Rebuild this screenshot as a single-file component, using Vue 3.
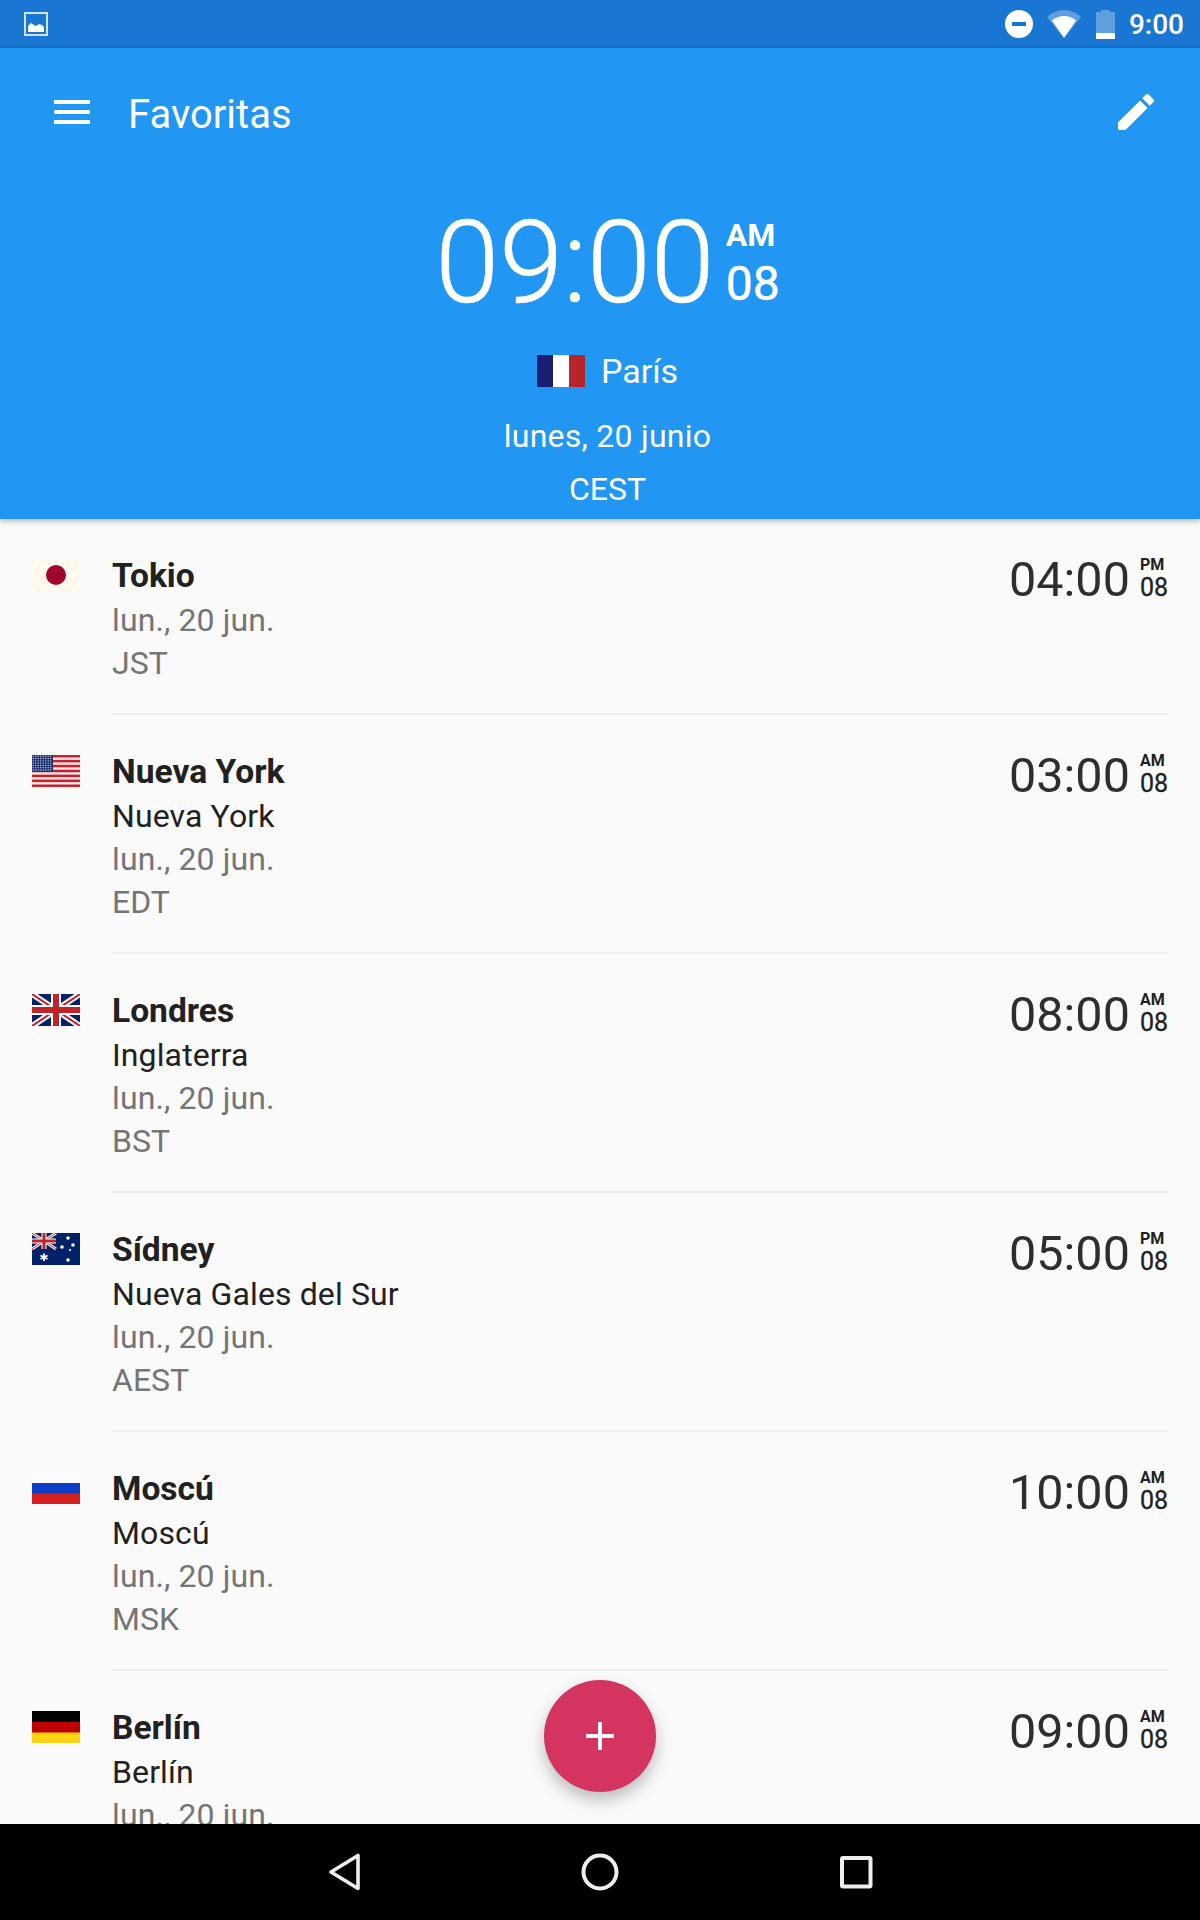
<script setup>
const rows = [
  { flag: 'jp', city: 'Tokio', date: 'lun., 20 jun.', zone: 'JST', time: '04:00', ap: 'PM' },
  { flag: 'us', city: 'Nueva York', sub: 'Nueva York', date: 'lun., 20 jun.', zone: 'EDT', time: '03:00', ap: 'AM' },
  { flag: 'gb', city: 'Londres', sub: 'Inglaterra', date: 'lun., 20 jun.', zone: 'BST', time: '08:00', ap: 'AM' },
  { flag: 'au', city: 'Sídney', sub: 'Nueva Gales del Sur', date: 'lun., 20 jun.', zone: 'AEST', time: '05:00', ap: 'PM' },
  { flag: 'ru', city: 'Moscú', sub: 'Moscú', date: 'lun., 20 jun.', zone: 'MSK', time: '10:00', ap: 'AM' },
  { flag: 'de', city: 'Berlín', sub: 'Berlín', date: 'lun., 20 jun.', zone: 'CEST', time: '09:00', ap: 'AM' }
]
const usStripes = [0, 2, 4, 6, 8, 10, 12]
const usDots = []
for (let y = 0; y < 7; y++) for (let x = 0; x < 8; x++) usDots.push({ x: 1.2 + x * 2.5, y: 1.2 + y * 2.3 })
</script>

<template>
  <div class="screen">
    <div class="status">
      <svg class="notif" width="24" height="24" viewBox="0 0 24 24">
        <rect x="1" y="1" width="22" height="22" fill="none" stroke="#fff" stroke-opacity=".8" stroke-width="2" />
        <path d="M4 20v-6l3-3 3 2 2 1 3-2 3 1 2 2v5z" fill="#fff" />
      </svg>
      <div class="status-right">
        <svg width="28" height="28" viewBox="0 0 28 28"><circle cx="14" cy="14" r="14" fill="#fff" /><rect x="7" y="12" width="14" height="4" fill="#1976D2" /></svg>
        <svg width="34" height="28" viewBox="0 0 34 28">
          <path d="M0 7C5 2.500 11 0 17 0s12 2.500 17 7L17 28z" fill="#fff" fill-opacity=".3" />
          <path d="M5 10.500C8.500 7.500 12.500 6 17 6s8.500 1.500 12 4.500L17 28z" fill="#fff" />
        </svg>
        <svg width="19" height="29" viewBox="0 0 19 29">
          <path d="M5 2V0h9v2h5v27H0V2z" fill="#fff" fill-opacity=".3" />
          <rect x="0" y="23" width="19" height="6" fill="#fff" />
        </svg>
        <span class="clock-small">9:00</span>
      </div>
    </div>

    <header class="header">
      <div class="toolbar">
        <svg width="48" height="48" viewBox="0 0 24 24"><path d="M3 18h18v-2H3v2zm0-5h18v-2H3v2zm0-7v2h18V6H3z" fill="#fff" /></svg>
        <span class="title">Favoritas</span>
        <svg width="48" height="48" viewBox="0 0 24 24"><path d="M3 17.250V21h3.750L17.810 9.940l-3.750-3.750L3 17.250zM20.710 7.040c.39-.39.39-1.020 0-1.410l-2.340-2.340c-.39-.39-1.020-.39-1.410 0l-1.830 1.830 3.750 3.750 1.830-1.830z" fill="#fff" /></svg>
      </div>
      <div class="hero">
        <div class="hero-clock">
          <span class="hero-time">09:00</span>
          <div class="hero-side"><span class="hero-ap">AM</span><span class="hero-sec">08</span></div>
        </div>
        <div class="hero-city">
          <svg width="48" height="32" viewBox="0 0 48 32"><rect width="16" height="32" fill="#1A1F71" /><rect x="16" width="16" height="32" fill="#fff" /><rect x="32" width="16" height="32" fill="#B5252B" /></svg>
          <span>París</span>
        </div>
        <div class="hero-date">lunes, 20 junio</div>
        <div class="hero-zone">CEST</div>
      </div>
    </header>

    <main class="list">
      <div v-for="r in rows" :key="r.flag" class="row">
        <svg class="flag" width="48" height="32" viewBox="0 0 48 32">
          <template v-if="r.flag === 'jp'">
            <rect width="48" height="32" fill="#FFF8EC" /><circle cx="24" cy="16" r="10" fill="#A0052D" />
          </template>
          <template v-else-if="r.flag === 'us'">
            <rect width="48" height="32" fill="#F4E4E4" />
            <rect v-for="s in usStripes" :key="s" y="0" width="48" height="2.460" :transform="`translate(0 ${s * 2.460})`" fill="#C8202C" />
            <rect width="21" height="17" fill="#1C2F6E" />
            <circle v-for="(d, i) in usDots" :key="i" :cx="d.x" :cy="d.y" r=".65" fill="#DDE3F2" />
          </template>
          <template v-else-if="r.flag === 'gb'">
            <rect width="48" height="32" fill="#012169" />
            <path d="M0 0L48 32M48 0L0 32" stroke="#fff" stroke-width="6" />
            <path d="M0 0L48 32M48 0L0 32" stroke="#C8202C" stroke-width="2" />
            <path d="M24 0V32M0 16H48" stroke="#fff" stroke-width="10" />
            <path d="M24 0V32M0 16H48" stroke="#C1232B" stroke-width="6" />
          </template>
          <template v-else-if="r.flag === 'au'">
            <rect width="48" height="32" fill="#012169" />
            <path d="M0 0L24 16M24 0L0 16" stroke="#fff" stroke-width="3" />
            <path d="M0 0L24 16M24 0L0 16" stroke="#C8202C" stroke-width="1" />
            <path d="M12 0V16M0 8H24" stroke="#fff" stroke-width="5" />
            <path d="M12 0V16M0 8H24" stroke="#C1232B" stroke-width="3" />
            <path d="M12 20.500v7.500M8.500 22.500l7 3.500M15.500 22.500l-7 3.500" stroke="#fff" stroke-width="1.800" />
            <circle cx="36" cy="5" r="1.800" fill="#fff" /><circle cx="30" cy="14" r="1.800" fill="#fff" /><circle cx="41" cy="12" r="1.800" fill="#fff" /><circle cx="38" cy="17" r="1.100" fill="#fff" /><circle cx="36" cy="27" r="1.800" fill="#fff" />
          </template>
          <template v-else-if="r.flag === 'ru'">
            <rect width="48" height="11" fill="#fff" /><rect y="11" width="48" height="11" fill="#0B3FC4" /><rect y="21.500" width="48" height="10.500" fill="#D42020" />
          </template>
          <template v-else>
            <rect width="48" height="11" fill="#000" /><rect y="11" width="48" height="11" fill="#BE0000" /><rect y="21.500" width="48" height="10.500" fill="#FFD214" />
          </template>
        </svg>
        <div class="row-body">
          <div class="row-text">
            <div class="city">{{ r.city }}</div>
            <div v-if="r.sub" class="sub">{{ r.sub }}</div>
            <div class="date">{{ r.date }}</div>
            <div class="zone">{{ r.zone }}</div>
          </div>
          <div class="row-clock">
            <span class="row-time">{{ r.time }}</span>
            <div class="row-side"><span class="row-ap">{{ r.ap }}</span><span class="row-sec">08</span></div>
          </div>
        </div>
      </div>
    </main>

    <nav class="nav">
      <svg width="48" height="48" viewBox="0 0 48 48"><path d="M11 24L38 7.500V40.500z" fill="none" stroke="#EEE" stroke-width="3.600" stroke-linejoin="round" /></svg>
      <svg width="48" height="48" viewBox="0 0 48 48"><circle cx="24" cy="24" r="16.500" fill="none" stroke="#EEE" stroke-width="4" /></svg>
      <svg width="48" height="48" viewBox="0 0 48 48"><rect x="10" y="10" width="28.500" height="28.500" rx="1" fill="none" stroke="#EEE" stroke-width="4" /></svg>
    </nav>

    <button class="fab" aria-label="Añadir">
      <svg width="48" height="48" viewBox="0 0 24 24"><path d="M19 13h-6v6h-2v-6H5v-2h6V5h2v6h6v2z" fill="#fff" /></svg>
    </button>
  </div>
</template>

<style scoped>
.screen {
  position: relative;
  width: 1200px;
  height: 1920px;
  display: flex;
  flex-direction: column;
  overflow: hidden;
  background: #FAFAFA;
  font-family: Roboto, "Liberation Sans", sans-serif;
}
.status {
  height: 48px;
  flex: none;
  background: #1976D2;
  display: flex;
  align-items: center;
  justify-content: space-between;
  padding: 0 16px 0 24px;
}
.status-right { display: flex; align-items: center; gap: 15px; color: #fff; }
.status-right svg:first-child { margin-right: -1px; }
.clock-small { font-size: 28px; font-weight: 500; margin-left: -1px; }
.header {
  flex: none;
  position: relative;
  z-index: 2;
  height: 471px;
  background: #2196F3;
  color: #fff;
  box-shadow: 0 2px 6px rgba(0, 0, 0, .3);
}
.toolbar {
  height: 128px;
  display: flex;
  align-items: center;
  padding: 0 40px 0 48px;
}
.title { flex: 1; margin-left: 32px; font-size: 40px; padding-top: 5px; }
.hero { display: flex; flex-direction: column; align-items: center; padding-left: 15px; padding-top: 21px; }
.hero-clock { display: flex; align-items: flex-start; gap: 11px; height: 132px; }
.hero-time { font-size: 115px; font-weight: 300; line-height: 132px; -webkit-text-stroke: .7px #fff; }
.hero-side { display: flex; flex-direction: column; margin-top: 18px; }
.hero-ap { font-size: 32px; font-weight: 700; line-height: 40px; }
.hero-sec { font-size: 48px; line-height: 52px; font-weight: 400; margin-top: 3px; -webkit-text-stroke: .5px #fff; }
.hero-city { display: flex; align-items: center; gap: 16px; font-size: 34px; margin-top: 20px; height: 44px; }
.hero-date { font-size: 32px; line-height: 44px; margin-top: 21px; letter-spacing: .25px; }
.hero-zone { font-size: 32px; line-height: 44px; margin-top: 9px; }
.list { flex: 1; min-height: 0; overflow: hidden; }
.row { display: flex; padding-left: 32px; }
.flag { flex: none; margin-top: 40px; margin-right: 32px; display: block; }
.row-body {
  flex: 1;
  display: flex;
  justify-content: space-between;
  margin-right: 32px;
  padding: 34px 0 29px;
  border-bottom: 2px solid #EEEEEE;
}
.city { font-size: 33.6px; font-weight: 700; line-height: 45px; color: #212121; }
.sub { font-size: 32px; line-height: 43px; color: #212121; letter-spacing: .12px; padding-top: 1px; margin-bottom: -1px; }
.date { font-size: 32px; line-height: 44px; color: #757575; letter-spacing: .12px; }
.zone { font-size: 32px; line-height: 42px; color: #757575; }
.row-clock { display: flex; align-items: flex-start; gap: 10px; color: #2E2E2E; }
.row-time { font-size: 48.5px; line-height: 56px; font-weight: 400; margin-top: -1px; }
.row-side { display: flex; flex-direction: column; color: #212121; }
.row-ap { font-size: 16px; font-weight: 700; line-height: 22px; margin-top: 1px; }
.row-sec { font-size: 25px; line-height: 24px; font-weight: 400; -webkit-text-stroke: .3px #212121; }
.nav {
  flex: none;
  height: 96px;
  background: #000;
  display: flex;
  align-items: center;
  justify-content: center;
  gap: 208px;
}
.nav svg, .toolbar svg, .status svg, .fab svg { display: block; flex: none; }
.fab {
  position: absolute;
  left: 544px;
  top: 1680px;
  width: 112px;
  height: 112px;
  border: 0;
  padding: 0;
  border-radius: 50%;
  background: #D33460;
  display: flex;
  align-items: center;
  justify-content: center;
  box-shadow: 0 8px 16px rgba(0, 0, 0, .25);
}
</style>

<style>
html, body { margin: 0; }
</style>
